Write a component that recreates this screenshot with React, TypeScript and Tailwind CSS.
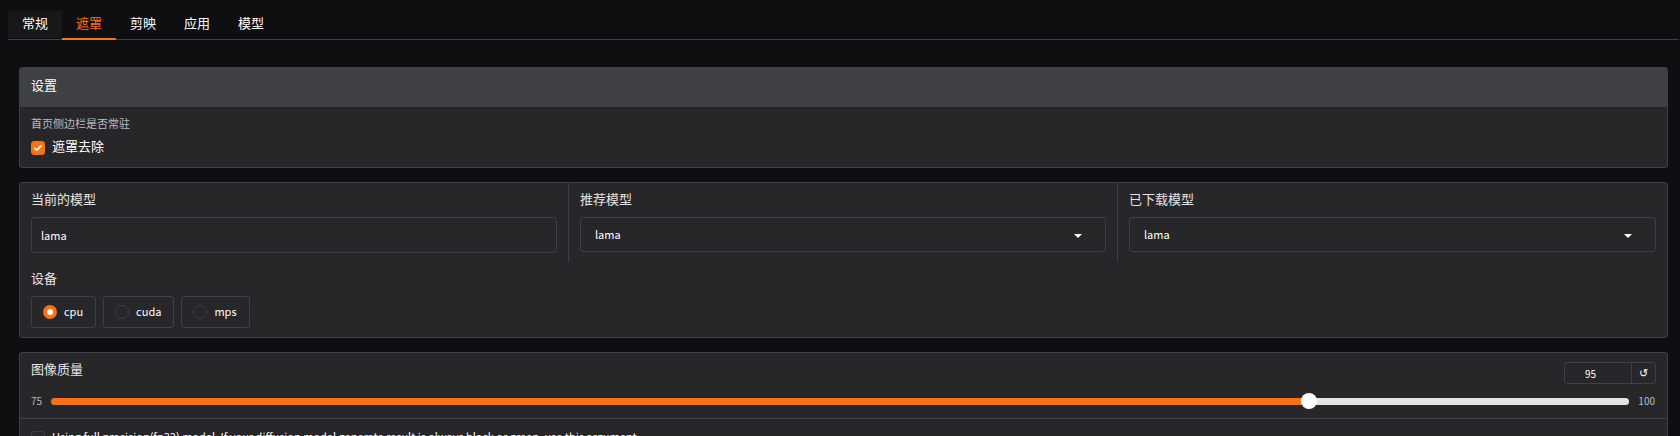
import { useState } from "react";
import type { ReactNode } from "react";

const TABS = ["常规", "遮罩", "剪映", "应用", "模型"];
const DEVICES = ["cpu", "cuda", "mps"];
const QUALITY_MIN = 75;
const QUALITY_MAX = 100;
const QUALITY_DEFAULT = 95;

function Tabs({ active, onSelect }: { active: string; onSelect: (tab: string) => void }) {
  return (
    <nav role="tablist" className="flex border-b border-[#3f3f46]">
      {TABS.map((tab) => (
        <button
          key={tab}
          type="button"
          role="tab"
          aria-selected={tab === active}
          onClick={() => onSelect(tab)}
          className={
            "-mb-px h-[29px] border-b-2 px-[14px] pb-[3px] text-[13px] leading-5 " +
            (tab === active
              ? "border-[#f97316] text-[#f97316]"
              : "border-transparent bg-clip-padding text-white first:bg-[#18181b]")
          }
        >
          {tab}
        </button>
      ))}
    </nav>
  );
}

function Card({ children }: { children: ReactNode }) {
  return (
    <section className="overflow-hidden rounded-[3px] border border-[#3f3f46] bg-[#27272a]">{children}</section>
  );
}

function Checkbox({ children, defaultChecked }: { children: ReactNode; defaultChecked?: boolean }) {
  return (
    <label className="flex items-center gap-[7px] leading-5 text-white">
      <span className="grid size-[14px] shrink-0">
        <input
          type="checkbox"
          defaultChecked={defaultChecked}
          className="peer col-start-1 row-start-1 size-[14px] appearance-none rounded-[3px] border border-[#3f3f46] bg-[#27272a] checked:border-[#f97316] checked:bg-[#f97316]"
        />
        <svg
          viewBox="0 0 16 16"
          fill="white"
          className="pointer-events-none invisible col-start-1 row-start-1 size-[14px] peer-checked:visible"
        >
          <path d="M12.207 4.793a1 1 0 010 1.414l-5 5a1 1 0 01-1.414 0l-2-2a1 1 0 011.414-1.414L6.5 9.086l4.293-4.293a1 1 0 011.414 0z" />
        </svg>
      </span>
      <span className="pb-1">{children}</span>
    </label>
  );
}

function ModelSelect({ id, label }: { id: string; label: string }) {
  return (
    <div className="px-[11px] pt-[6px] pb-[10px]">
      <label htmlFor={id} className="mb-2 block text-[13px] leading-5 text-[#e4e4e7]">
        {label}
      </label>
      <div className="grid items-center">
        <select
          id={id}
          defaultValue="lama"
          className="col-start-1 row-start-1 h-[35px] w-full appearance-none rounded-[3px] border border-[#3f3f46] bg-[#27272a] px-[14px] pb-[2px] text-[11px] leading-5 text-white"
        >
          <option>lama</option>
        </select>
        <svg
          viewBox="0 0 18 18"
          fill="white"
          className="pointer-events-none col-start-1 row-start-1 mr-[19px] size-[18px] justify-self-end"
        >
          <path d="M5 8l4 4 4-4z" />
        </svg>
      </div>
    </div>
  );
}

function Quality() {
  const [quality, setQuality] = useState(QUALITY_DEFAULT);
  const percent = ((quality - QUALITY_MIN) / (QUALITY_MAX - QUALITY_MIN)) * 100;
  return (
    <div className="px-[11px] pb-[7px]">
      <div className="flex items-start justify-between">
        <label htmlFor="quality" className="pt-[6px] text-[13px] leading-5 text-[#e4e4e7]">
          图像质量
        </label>
        <div className="mt-[9px] flex h-[22px] overflow-hidden rounded-[3px] border border-[#3f3f46] text-[10px]">
          <input
            type="number"
            aria-label="图像质量"
            min={QUALITY_MIN}
            max={QUALITY_MAX}
            value={quality}
            onChange={(e) => setQuality(Number(e.target.value))}
            className="w-[66px] bg-transparent text-center text-white"
          />
          <button
            type="button"
            aria-label="重置"
            onClick={() => setQuality(QUALITY_DEFAULT)}
            className="flex w-6 items-center justify-center border-l border-[#3f3f46] font-['DejaVu_Sans',sans-serif] text-[11px] leading-none text-white"
          >
            ↺
          </button>
        </div>
      </div>
      <div className="mt-[7px] flex items-center text-[10px] leading-5 text-[#bbbbc2]">
        <span className="w-5">{QUALITY_MIN}</span>
        <input
          id="quality"
          type="range"
          min={QUALITY_MIN}
          max={QUALITY_MAX}
          value={quality}
          onChange={(e) => setQuality(Number(e.target.value))}
          style={{ backgroundImage: `linear-gradient(to right, #f97316 ${percent}%, #e4e4e4 ${percent}%)` }}
          className="h-[7px] min-w-0 flex-1 appearance-none rounded-full [&::-webkit-slider-thumb]:size-4 [&::-webkit-slider-thumb]:appearance-none [&::-webkit-slider-thumb]:rounded-full [&::-webkit-slider-thumb]:bg-white"
        />
        <span className="w-[27px] pr-px text-right">{QUALITY_MAX}</span>
      </div>
    </div>
  );
}

export default function App() {
  const [tab, setTab] = useState("遮罩");
  const [device, setDevice] = useState("cpu");
  return (
    <main className="h-screen overflow-hidden bg-[#0f0f11] pt-[11px] pr-px pl-2 font-['Noto_Sans_CJK_SC',sans-serif]">
      <Tabs active={tab} onSelect={setTab} />
      <div className="flex flex-col gap-[14px] px-[11px] pt-[27px]">
        <Card>
          <h2 className="bg-[#3f3f46] px-[11px] pt-[7px] pb-3 text-[13px] leading-5 text-white">设置</h2>
          <div className="px-[11px] pt-[7px] pb-[7px]">
            <p className="mb-1 text-[11px] leading-[18px] text-[#bbbbc2]">首页侧边栏是否常驻</p>
            <Checkbox defaultChecked>
              <span className="block text-[13px]">遮罩去除</span>
            </Checkbox>
          </div>
        </Card>

        <Card>
          <div className="grid grid-cols-3 divide-x divide-[#3f3f46]">
            <div className="px-[11px] pt-[6px] pb-[9px]">
              <label htmlFor="current-model" className="mb-2 block text-[13px] leading-5 text-[#e4e4e7]">
                当前的模型
              </label>
              <input
                id="current-model"
                defaultValue="lama"
                className="block h-9 w-full rounded-[3px] border border-[#3f3f46] bg-[#27272a] px-[9px] text-[11px] leading-5 text-white"
              />
            </div>
            <ModelSelect id="recommended-model" label="推荐模型" />
            <ModelSelect id="downloaded-model" label="已下载模型" />
          </div>
          <fieldset className="px-[11px] pt-[6px] pb-[9px]">
            <legend className="float-left mb-2 w-full text-[13px] leading-5 text-[#e4e4e7]">设备</legend>
            <div className="clear-both flex gap-[7px]">
              {DEVICES.map((name) => (
                <label
                  key={name}
                  className="flex h-8 items-center gap-[7px] rounded-[3px] border border-[#3f3f46] pr-3 pl-[11px] text-[11px] leading-5 text-white"
                >
                  <input
                    type="radio"
                    name="device"
                    checked={device === name}
                    onChange={() => setDevice(name)}
                    className="size-[14px] appearance-none rounded-full border border-[#3f3f46] checked:border-4 checked:border-[#f97316] checked:bg-white"
                  />
                  <span className="pb-[2px]">{name}</span>
                </label>
              ))}
            </div>
          </fieldset>
        </Card>

        <Card>
          <Quality />
          <div className="border-t border-[#3f3f46] px-[11px] py-[7px]">
            <Checkbox>
              <span className="block text-[11px]">
                Using full precision(fp32) model. If your diffusion model generate result is always black or green, use
                this argument
              </span>
            </Checkbox>
          </div>
        </Card>
      </div>
    </main>
  );
}
